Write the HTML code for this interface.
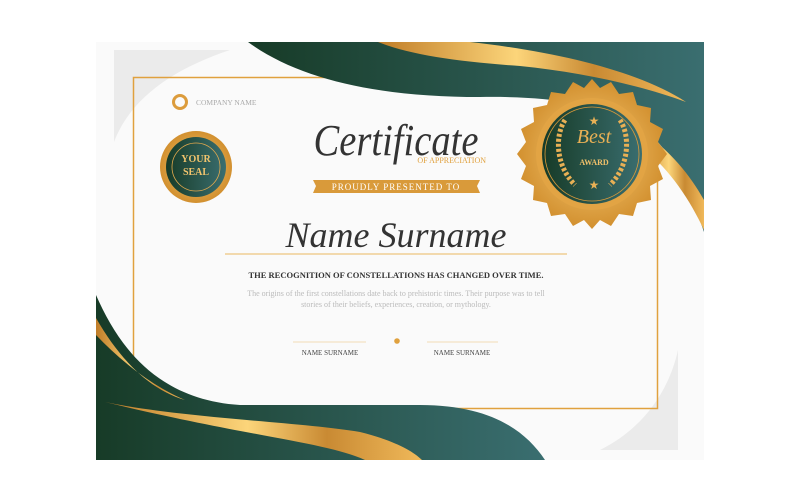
<!DOCTYPE html>
<html><head><style>
body{margin:0;width:800px;height:500px;background:#fff;overflow:hidden;font-family:"Liberation Serif",serif}
svg{position:absolute;left:0;top:0}
</style></head><body>
<svg width="800" height="500" viewBox="0 0 800 500">
<defs>
<linearGradient id="gr" x1="0" x2="1" y1="0" y2="0"><stop offset="0" stop-color="#173b27"/><stop offset="1" stop-color="#3a6e70"/></linearGradient>
<linearGradient id="go" x1="0" x2="1" y1="0" y2="0"><stop offset="0" stop-color="#c07d28"/><stop offset=".45" stop-color="#fcd57a"/><stop offset=".7" stop-color="#c98a33"/><stop offset="1" stop-color="#f0b95a"/></linearGradient>
<radialGradient id="gs"><stop offset="0" stop-color="#f8cc78"/><stop offset="1" stop-color="#d2902f"/></radialGradient>
</defs>
<rect x="96" y="42" width="608" height="418" fill="#fafafa"/>
<path d="M114,50 L230,50 C170,70 130,100 114,142 Z" fill="#ebebeb"/>
<path d="M678,350 L678,450 L600,450 C640,430 668,395 678,350 Z" fill="#ebebeb"/>
<rect x="133.5" y="77.5" width="524" height="331" fill="none" stroke="#e0a13e" stroke-width="1.5"/>
<path d="M248,42 L704,42 L704,232 C690,190 672,150 640,125 C600,102 540,96 480,97 C380,97 300,80 248,42 Z" fill="url(#gr)"/>
<path d="M378,42 L470,42 C560,52 640,72 686,102 C640,85 580,72 520,66 C460,62 410,55 378,42Z" fill="url(#go)"/>
<path d="M640,130 C670,150 690,175 704,200 L704,230 C690,200 670,170 645,150 Z" fill="url(#go)"/>
<path d="M96,295 C120,350 160,400 240,405 L420,405 C490,405 525,430 545,460 L96,460 Z" fill="url(#gr)"/>
<path d="M96,318 C120,360 150,390 185,400 C150,385 120,360 96,335 Z" fill="url(#go)"/>
<path d="M105,402 C180,418 300,422 360,432 C392,440 412,450 422,460 L365,460 C325,442 250,437 105,402 Z" fill="url(#go)"/>
<circle cx="180" cy="102" r="6.5" fill="none" stroke="#dc9c3c" stroke-width="3"/>
<text x="196" y="105" font-size="7.5" fill="#aaa">COMPANY NAME</text>
<circle cx="196" cy="167" r="36" fill="url(#gs)"/>
<circle cx="196" cy="167" r="30" fill="url(#gr)"/>
<circle cx="196" cy="167" r="24" fill="none" stroke="#e3a94d" stroke-width=".8"/>
<text x="196" y="162" font-size="10" font-weight="bold" fill="#f2c46d" text-anchor="middle">YOUR</text>
<text x="196" y="175" font-size="10" font-weight="bold" fill="#f2c46d" text-anchor="middle">SEAL</text>
<text x="396" y="155" font-size="44" font-style="italic" fill="#333" text-anchor="middle" textLength="165" lengthAdjust="spacingAndGlyphs">Certificate</text>
<text x="486" y="163" font-size="8" fill="#e0a13e" text-anchor="end">OF APPRECIATION</text>
<path d="M313,180 L480,180 L477,186 L480,193 L313,193 L316,186 Z" fill="#d99a3a"/>
<text x="396" y="190" font-size="9" fill="#fff" text-anchor="middle" letter-spacing="1">PROUDLY PRESENTED TO</text>
<text x="396" y="247" font-size="36" font-style="italic" fill="#333" text-anchor="middle">Name Surname</text>
<line x1="225" y1="254" x2="567" y2="254" stroke="#e9b860" stroke-width="1"/>
<text x="396" y="278" font-size="8.5" font-weight="bold" fill="#333" text-anchor="middle">THE RECOGNITION OF CONSTELLATIONS HAS CHANGED OVER TIME.</text>
<text x="396" y="296" font-size="8" fill="#bbb" text-anchor="middle">The origins of the first constellations date back to prehistoric times. Their purpose was to tell</text>
<text x="396" y="307" font-size="8" fill="#bbb" text-anchor="middle">stories of their beliefs, experiences, creation, or mythology.</text>
<line x1="293" y1="342" x2="366" y2="342" stroke="#f3dcb6"/>
<line x1="427" y1="342" x2="498" y2="342" stroke="#f3dcb6"/>
<circle cx="397" cy="341" r="2.8" fill="#e0a13e"/>
<text x="330" y="355" font-size="7" fill="#444" text-anchor="middle">NAME SURNAME</text>
<text x="462" y="355" font-size="7" fill="#444" text-anchor="middle">NAME SURNAME</text>
<polygon fill="url(#gs)" points="
667,154 658,166 663,179 650,186 651,200 637,203 633,216 619,214 611,226 600,220 592,229 584,220 573,226 565,214 551,216 547,203 533,200 534,186 521,179 526,166 517,154 526,142 521,129 534,122 533,108 547,105 551,92 565,94 573,82 584,88 592,79 600,88 611,82 619,94 633,92 637,105 651,108 650,122 663,129 658,142"/>
<circle cx="592" cy="154" r="56" fill="#e2a444"/>
<circle cx="592" cy="154" r="50" fill="url(#gr)"/>
<circle cx="592" cy="154" r="47" fill="none" stroke="#d99a3a" stroke-width=".8"/>
<text x="594" y="143" font-size="20" font-style="italic" fill="#e8b055" text-anchor="middle">Best</text>
<text x="594" y="165" font-size="8" font-weight="bold" fill="#f0c06a" text-anchor="middle">AWARD</text>
<text x="594" y="125" font-size="12" fill="#e8b055" text-anchor="middle">★</text>
<text x="594" y="189" font-size="12" fill="#e8b055" text-anchor="middle">★</text>
<path d="M565,120 C555,135 555,165 575,185" fill="none" stroke="#e8b055" stroke-width="5" stroke-dasharray="3 2"/>
<path d="M620,120 C630,135 630,165 610,185" fill="none" stroke="#e8b055" stroke-width="5" stroke-dasharray="3 2"/>
</svg>
</body></html>
